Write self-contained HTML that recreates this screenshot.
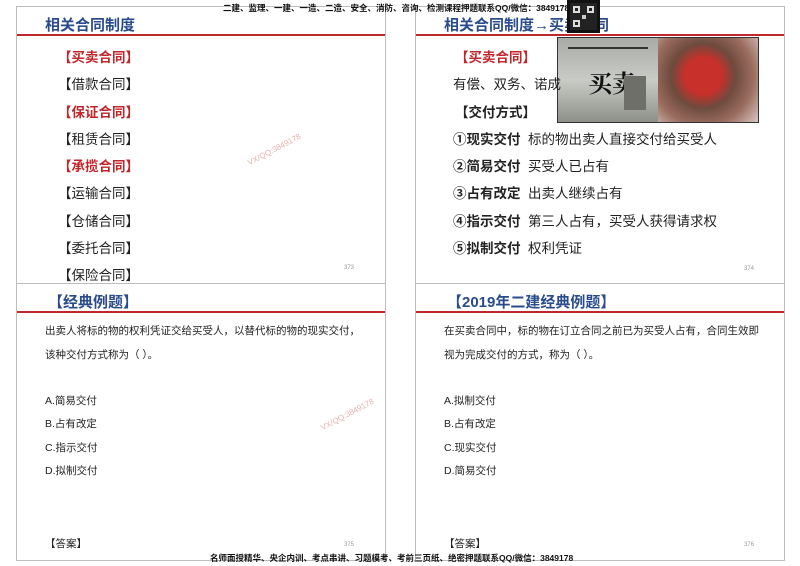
<!DOCTYPE html>
<html><head><meta charset="utf-8"><style>
*{margin:0;padding:0;box-sizing:border-box}
body{width:800px;height:566px;background:#fff;position:relative;overflow:hidden;font-family:"Liberation Sans","Noto Sans CJK SC",sans-serif;color:#222}
.s{position:absolute;border:1px solid #bdbdbd;background:#fff}
.t{position:absolute;white-space:nowrap}
.h{font-size:15px;font-weight:bold;color:#2b4c8c}
.rl{position:absolute;height:2px;background:#c0262b}
.it{font-size:13.5px;color:#222}
.red{color:#c0262b;font-weight:bold}
.q{font-size:10.5px;color:#222}
.pn{font-size:6px;color:#999}
.wm{position:absolute;font-size:8px;color:#e7b0b0;transform:rotate(-28deg);white-space:nowrap}
.hf{font-size:8.5px;color:#111;font-weight:bold}
</style></head><body>
<div class="s" style="left:16px;top:6px;width:370px;height:278px"></div>
<div class="s" style="left:415px;top:6px;width:370px;height:278px"></div>
<div class="s" style="left:16px;top:283px;width:370px;height:278px"></div>
<div class="s" style="left:415px;top:283px;width:370px;height:278px"></div>

<div class="rl" style="left:17px;top:34px;width:368px"></div>
<div class="rl" style="left:416px;top:34px;width:368px"></div>
<div class="rl" style="left:17px;top:311px;width:368px"></div>
<div class="rl" style="left:416px;top:311px;width:368px"></div>

<div class="t hf" style="left:223px;top:2px">二建、监理、一建、一造、二造、安全、消防、咨询、检测课程押题联系QQ/微信：3849178</div>
<div class="t hf" style="left:210px;top:552px">名师面授精华、央企内训、考点串讲、习题模考、考前三页纸、绝密押题联系QQ/微信：3849178</div>

<!-- slide 1 -->
<div class="t h" style="left:45px;top:14px">相关合同制度</div>
<div class="t it red" style="left:58px;top:46px">【买卖合同】</div>
<div class="t it" style="left:58px;top:73px">【借款合同】</div>
<div class="t it red" style="left:58px;top:101px">【保证合同】</div>
<div class="t it" style="left:58px;top:128px">【租赁合同】</div>
<div class="t it red" style="left:58px;top:155px">【承揽合同】</div>
<div class="t it" style="left:58px;top:182px">【运输合同】</div>
<div class="t it" style="left:58px;top:210px">【仓储合同】</div>
<div class="t it" style="left:58px;top:237px">【委托合同】</div>
<div class="t it" style="left:58px;top:264px">【保险合同】</div>
<div class="t pn" style="left:344px;top:265px">373</div>
<div class="wm" style="left:245px;top:145px">VX/QQ:3849178</div>

<!-- slide 2 -->
<div class="t h" style="left:444px;top:14px">相关合同制度→买卖合同</div>
<div style="position:absolute;left:567px;top:0;width:33px;height:33px;background:#222;border:3px solid #111"><div style="position:absolute;left:3px;top:3px;width:7px;height:7px;border:2px solid #ddd"></div><div style="position:absolute;right:3px;top:3px;width:7px;height:7px;border:2px solid #ddd"></div><div style="position:absolute;left:3px;bottom:3px;width:7px;height:7px;border:2px solid #ddd"></div><div style="position:absolute;left:12px;top:12px;width:4px;height:4px;background:#ccc"></div></div>
<div style="position:absolute;left:557px;top:37px;width:202px;height:86px;border:1px solid #333;display:flex">
 <div style="width:101px;height:100%;background:linear-gradient(180deg,#a8aba6,#c9cbc6 50%,#8d8f89);position:relative">
  <div class="t" style="left:30px;top:26px;font-family:'Noto Serif CJK SC',serif;font-size:24px;color:#111;font-weight:bold">买卖</div>
  <div style="position:absolute;left:10px;top:9px;width:80px;height:2px;background:#333"></div>
  <div style="position:absolute;left:66px;top:38px;width:22px;height:34px;background:#6f6f6a"></div>
 </div>
 <div style="width:101px;height:100%;background:radial-gradient(circle at 45% 45%,#c8302b 0 25%,#6e4b3e 45%,#9b6d60 70%,#d8c7c2);"></div>
</div>
<div class="t it red" style="left:455px;top:46px">【买卖合同】</div>
<div class="t it" style="left:453px;top:73px">有偿、双务、诺成</div>
<div class="t it" style="left:455px;top:101px;font-weight:bold">【交付方式】</div>
<div class="t it" style="left:453px;top:128px"><b>①现实交付</b>&nbsp; 标的物出卖人直接交付给买受人</div>
<div class="t it" style="left:453px;top:155px"><b>②简易交付</b>&nbsp; 买受人已占有</div>
<div class="t it" style="left:453px;top:182px"><b>③占有改定</b>&nbsp; 出卖人继续占有</div>
<div class="t it" style="left:453px;top:210px"><b>④指示交付</b>&nbsp; 第三人占有，买受人获得请求权</div>
<div class="t it" style="left:453px;top:237px"><b>⑤拟制交付</b>&nbsp; 权利凭证</div>
<div class="t pn" style="left:744px;top:266px">374</div>

<!-- slide 3 -->
<div class="t h" style="left:48px;top:291px">【经典例题】</div>
<div class="t q" style="left:45px;top:323px">出卖人将标的物的权利凭证交给买受人，以替代标的物的现实交付，</div>
<div class="t q" style="left:45px;top:347px">该种交付方式称为（ ）。</div>
<div class="t q" style="left:45px;top:393px">A.简易交付</div>
<div class="t q" style="left:45px;top:416px">B.占有改定</div>
<div class="t q" style="left:45px;top:440px">C.指示交付</div>
<div class="t q" style="left:45px;top:463px">D.拟制交付</div>
<div class="t q" style="left:45px;top:536px">【答案】</div>
<div class="t pn" style="left:344px;top:542px">375</div>
<div class="wm" style="left:318px;top:410px">VX/QQ:3849178</div>

<!-- slide 4 -->
<div class="t h" style="left:447px;top:291px">【2019年二建经典例题】</div>
<div class="t q" style="left:444px;top:323px">在买卖合同中，标的物在订立合同之前已为买受人占有，合同生效即</div>
<div class="t q" style="left:444px;top:347px">视为完成交付的方式，称为（ ）。</div>
<div class="t q" style="left:444px;top:393px">A.拟制交付</div>
<div class="t q" style="left:444px;top:416px">B.占有改定</div>
<div class="t q" style="left:444px;top:440px">C.现实交付</div>
<div class="t q" style="left:444px;top:463px">D.简易交付</div>
<div class="t q" style="left:444px;top:536px">【答案】</div>
<div class="t pn" style="left:744px;top:542px">376</div>
</body></html>
